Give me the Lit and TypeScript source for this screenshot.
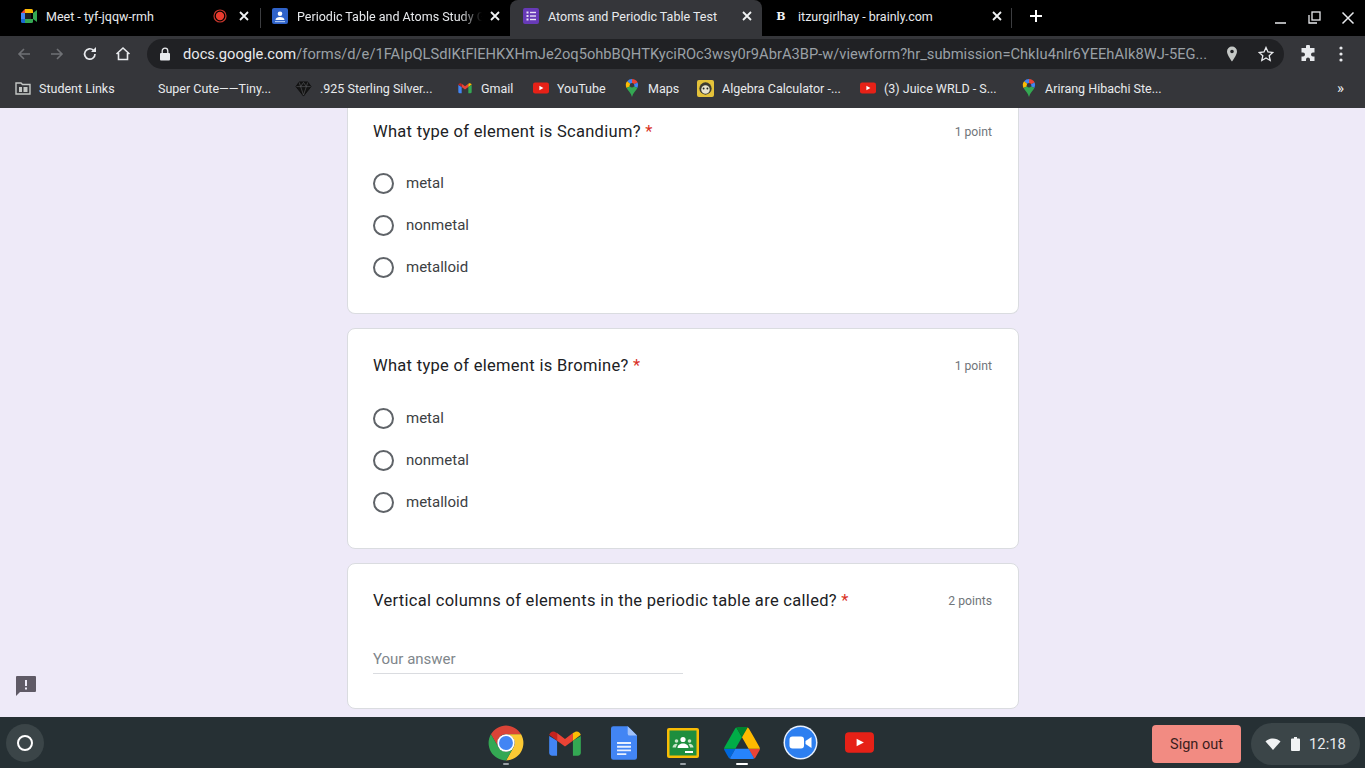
import {css, html, LitElement, svg} from 'lit';
import {customElement} from 'lit/decorators.js';

const meetIcon = html`<svg width="16" height="16" viewBox="0 0 16 16">
    <path d="M0 5l4-4v4z" fill="#ea4335"/>
    <path d="M0 5h4v6H0z" fill="#4285f4"/>
    <path d="M0 11h4v4H1.500A1.500 1.500 0 0 1 0 13.500z" fill="#1967d2"/>
    <path d="M4 1h6.500A1.500 1.500 0 0 1 12 2.500V5H4z" fill="#fbbc04"/>
    <path d="M4 11h8v2.500a1.500 1.500 0 0 1-1.500 1.500H4z" fill="#34a853"/>
    <path d="M12 5l4-3v12l-4-3z" fill="#34a853"/>
    <path d="M4 5h6v6H4z" fill="#1f1f1f"/>
</svg>`;

const classroomTabIcon = html`<svg width="18" height="18" viewBox="0 0 18 18">
    <rect x="1" y="1" width="16" height="16" rx="2" fill="#2f62c9"/>
    <circle cx="9" cy="6.700" r="2.300" fill="#fff"/>
    <path d="M4.500 13c0-2 2-3 4.500-3s4.500 1 4.500 3z" fill="#fff"/>
    <rect x="4" y="14" width="10" height="1.200" fill="#a8c3f0"/>
</svg>`;

const formsIcon = html`<svg width="18" height="18" viewBox="0 0 18 18">
    <rect x="1" y="1" width="16" height="16" rx="2" fill="#673ab7"/>
    <g fill="#e8e0f5">
        <rect x="4.500" y="4.500" width="2" height="2"/>
        <rect x="8" y="4.800" width="6" height="1.400"/>
        <rect x="4.500" y="8" width="2" height="2"/>
        <rect x="8" y="8.300" width="6" height="1.400"/>
        <rect x="4.500" y="11.500" width="2" height="2"/>
        <rect x="8" y="11.800" width="6" height="1.400"/>
    </g>
</svg>`;

const closeIcon = html`<svg width="10" height="10" viewBox="0 0 10 10">
    <path d="M1 1l8 8M9 1l-8 8" stroke="#f1f3f4" stroke-width="1.800" fill="none"/>
</svg>`;

const recordIcon = html`<svg width="14" height="14" viewBox="0 0 14 14">
    <circle cx="7" cy="7" r="6" fill="none" stroke="#c5352b" stroke-width="1.200"/>
    <circle cx="7" cy="7" r="4.200" fill="#ea3b2e"/>
</svg>`;

const folderIcon = html`<svg width="16" height="16" viewBox="0 0 16 16">
    <path d="M1 3h5l1.500 1.500H15V14H1z" fill="none" stroke="#c4c7c5" stroke-width="1.400"/>
    <rect x="4" y="7" width="3" height="5" fill="#c4c7c5"/>
    <rect x="8.500" y="7" width="4" height="5" fill="#c4c7c5"/>
</svg>`;

const gemIcon = html`<svg width="17" height="17" viewBox="0 0 18 18">
    <path d="M4.500 2h9L17 7l-8 10L1 7z" fill="#141414" stroke="#0a0a0a" stroke-width=".8"/>
    <path d="M1.500 7h15M6 7l3 9 3-9M4.500 2.500L6 7l3-4.500L12 7l1.500-4.500" fill="none" stroke="#55565a" stroke-width=".7"/>
</svg>`;

const gmailPaths = svg`
    <path d="M4 15v21a4 4 0 0 0 4 4h6V21z" fill="#4285f4"/>
    <path d="M44 15v21a4 4 0 0 1-4 4h-6V21z" fill="#34a853"/>
    <path d="M14 11.500L24 19l10-7.500V21l-10 7.500L14 21z" fill="#ea4335"/>
    <path d="M4 15c0-4.500 5-7 8.500-4.400L14 11.500V21L4 13.500z" fill="#c5221f"/>
    <path d="M44 15c0-4.500-5-7-8.500-4.400L34 11.500V21l10-7.500z" fill="#fbbc04"/>
`;

const youtubeIcon = (w: number, h: number) => html`<svg width=${w} height=${h} viewBox="0 0 30 21">
    <rect width="30" height="21" rx="4" fill="#e62117"/>
    <path d="M12 6.500l7.500 4-7.500 4z" fill="#fff"/>
</svg>`;

const mapsIcon = html`<svg width="16" height="18" viewBox="0 0 16 20">
    <path d="M8 0a7 7 0 0 0-5.400 2.500L8 7z" fill="#4285f4"/>
    <path d="M8 0a7 7 0 0 1 6.300 4L8 7z" fill="#ea4335"/>
    <path d="M14.300 4A7 7 0 0 1 14 10L8 7z" fill="#4285f4"/>
    <path d="M2.600 2.500A7 7 0 0 0 2 10l6-3z" fill="#fbbc04"/>
    <path d="M2 10c1.500 3 5 5.500 6 10 1-4.500 4.500-7 6-10L8 7z" fill="#34a853"/>
    <circle cx="8" cy="7" r="2.500" fill="#35363a"/>
</svg>`;

const algebraIcon = html`<svg width="17" height="17" viewBox="0 0 18 18">
    <rect width="18" height="18" rx="2" fill="#e4c23a"/>
    <circle cx="9" cy="9" r="6.500" fill="#3c3a30"/>
    <circle cx="9" cy="10" r="4.500" fill="#e8e4d0"/>
    <circle cx="7" cy="9" r="1" fill="#222"/>
    <circle cx="11" cy="9" r="1" fill="#222"/>
</svg>`;

type Tab = { title: string; icon: unknown; width: number; active?: boolean; recording?: boolean; divider?: boolean; fade?: boolean };

const tabs: Tab[] = [
    {title: 'Meet - tyf-jqqw-rmh', icon: meetIcon, width: 251, recording: true, divider: true},
    {title: 'Periodic Table and Atoms Study Guide', icon: classroomTabIcon, width: 249, fade: true},
    {title: 'Atoms and Periodic Table Test', icon: formsIcon, width: 252, active: true},
    {title: 'itzurgirlhay - brainly.com', icon: html`<span class="brainly">B</span>`, width: 250, divider: true},
];

type Bookmark = { label: string; icon?: unknown; width: number };

const bookmarks: Bookmark[] = [
    {label: 'Student Links', icon: folderIcon, width: 119},
    {label: 'Super Cute——Tiny...', width: 161},
    {label: '.925 Sterling Silver...', icon: gemIcon, width: 162},
    {label: 'Gmail', icon: html`<svg width="16" height="16" viewBox="0 0 48 48">${gmailPaths}</svg>`, width: 76},
    {label: 'YouTube', icon: youtubeIcon(16, 12), width: 91},
    {label: 'Maps', icon: mapsIcon, width: 73},
    {label: 'Algebra Calculator -...', icon: algebraIcon, width: 163},
    {label: '(3) Juice WRLD - S...', icon: youtubeIcon(16, 12), width: 161},
    {label: 'Arirang Hibachi Ste...', icon: mapsIcon, width: 150},
];

const choices = ['metal', 'nonmetal', 'metalloid'];

@customElement('app-root')
export class AppRoot extends LitElement {

    static styles = css`
        :host {
            display: flex;
            flex-direction: column;
            width: 1365px;
            height: 768px;
            overflow: hidden;
            font-family: Roboto, "Liberation Sans", sans-serif;
        }

        /* tab strip */
        .tabstrip {
            display: flex;
            align-items: flex-end;
            height: 36px;
            padding-left: 10px;
            background: #000;
            flex: none;
        }

        .tab {
            display: flex;
            align-items: center;
            gap: 7px;
            box-sizing: border-box;
            height: 34px;
            padding: 0 9px 6px 10px;
            color: #e8eaed;
            font-size: 12.500px;
            position: relative;
            flex: none;
        }

        .tab.active {
            height: 36px;
            padding-bottom: 4px;
            padding-left: 12px;
            background: #35363a;
            border-radius: 8px 8px 0 0;
        }

        .tabdivider::after {
            content: "";
            position: absolute;
            right: 0;
            top: 6px;
            width: 1px;
            height: 20px;
            background: #3c3d40;
        }

        .tabtitle {
            flex: 1;
            min-width: 0;
            white-space: nowrap;
            overflow: hidden;
            padding-left: 1px;
        }

        .tabtitle.fade {
            -webkit-mask-image: linear-gradient(90deg, #000 88%, transparent 100%);
            mask-image: linear-gradient(90deg, #000 88%, transparent 100%);
        }

        .tabicon {
            display: flex;
            align-items: center;
            justify-content: center;
            width: 18px;
            height: 18px;
            flex: none;
        }

        .brainly {
            color: #f1f3f4;
            font-family: "DejaVu Serif", serif;
            font-weight: 700;
            font-size: 11px;
        }

        .record {
            display: flex;
            margin-right: 4px;
        }

        .close {
            display: flex;
            align-items: center;
            justify-content: center;
            width: 12px;
        }

        .recording .close {
            margin-right: 2px;
        }

        .newtab {
            display: flex;
            margin-left: 16px;
            padding-bottom: 12px;
        }

        .windowcontrols {
            display: flex;
            align-items: center;
            margin-left: auto;
            padding-bottom: 3px;
        }

        .winbtn {
            display: flex;
            align-items: center;
            justify-content: center;
            width: 34px;
            height: 30px;
        }

        /* toolbar */
        .toolbar {
            display: flex;
            align-items: center;
            height: 36px;
            padding-left: 7px;
            background: #35363a;
            flex: none;
        }

        .navbtn {
            display: flex;
            align-items: center;
            justify-content: center;
            width: 33px;
            height: 30px;
            flex: none;
        }

        .omnibox {
            display: flex;
            align-items: center;
            box-sizing: border-box;
            width: 1137px;
            height: 30px;
            margin-left: 8px;
            padding: 0 10px 0 12px;
            border-radius: 15px;
            background: #202124;
            font-size: 14.700px;
            color: #9aa0a6;
            flex: none;
        }

        .url {
            flex: 1;
            min-width: 0;
            margin-left: 12px;
            white-space: nowrap;
            overflow: hidden;
        }

        .host {
            color: #e8eaed;
        }

        .omniicons {
            display: flex;
            align-items: center;
            gap: 20px;
            margin-left: 18px;
        }

        .extras {
            display: flex;
            align-items: center;
            gap: 22px;
            margin-left: 15px;
        }

        /* bookmarks */
        .bookmarks {
            display: flex;
            align-items: center;
            box-sizing: border-box;
            height: 36px;
            padding: 0 0 4px 15px;
            background: #35363a;
            color: #e8eaed;
            font-size: 12.500px;
            flex: none;
        }

        .bookmark {
            display: flex;
            align-items: center;
            gap: 8px;
            white-space: nowrap;
            flex: none;
        }

        .bookmark.noicon {
            padding-left: 24px;
            box-sizing: border-box;
        }

        .bookmarks .more {
            margin-left: auto;
            padding-right: 21px;
            font-size: 15px;
        }

        /* form */
        .content {
            position: relative;
            flex: 1;
            min-height: 0;
            display: flex;
            flex-direction: column;
            align-items: center;
            gap: 14px;
            padding-left: 1px;
            overflow: hidden;
            background: #eeeaf8;
        }

        .card {
            box-sizing: border-box;
            width: 672px;
            padding: 23px 26px 0 25px;
            background: #fff;
            border: 1px solid #dadce0;
            border-radius: 8px;
            color: #202124;
            flex: none;
        }

        .card.first {
            height: 206px;
            padding-top: 10px;
            border-top: 0;
            border-radius: 0 0 8px 8px;
        }

        .card.second {
            height: 221px;
        }

        .card.third {
            height: 146px;
        }

        .title {
            display: flex;
            align-items: center;
            justify-content: space-between;
            height: 26px;
            font-size: 16.500px;
            letter-spacing: .3px;
        }

        .required {
            color: #d93025;
        }

        .points {
            padding-top: 1px;
            font-size: 12.200px;
            letter-spacing: 0;
            color: #70757a;
        }

        .choices {
            margin-top: 18px;
        }

        .second .choices {
            margin-top: 19px;
        }

        .choice {
            display: flex;
            align-items: center;
            gap: 12px;
            height: 42px;
            font-size: 15px;
            color: #3c4043;
        }

        .radio {
            box-sizing: border-box;
            width: 21px;
            height: 21px;
            border: 2px solid #5f6368;
            border-radius: 50%;
            flex: none;
        }

        .answer {
            box-sizing: border-box;
            width: 310px;
            height: 32px;
            margin-top: 29px;
            padding-top: 8px;
            border-bottom: 1px solid #dadce0;
            font-size: 15px;
            color: #80868b;
        }

        .feedback {
            position: absolute;
            left: 15px;
            bottom: 20px;
            display: flex;
        }

        /* shelf */
        .shelf {
            display: grid;
            grid-template-columns: 1fr auto 1fr;
            align-items: center;
            height: 51px;
            background: #263034;
            flex: none;
        }

        .launcher {
            display: flex;
            align-items: center;
            justify-content: center;
            width: 38px;
            height: 38px;
            margin-left: 6px;
            border-radius: 50%;
            background: #3b4548;
        }

        .launcher span {
            box-sizing: border-box;
            width: 16px;
            height: 16px;
            border: 2px solid #fff;
            border-radius: 50%;
        }

        .apps {
            display: flex;
        }

        .app {
            position: relative;
            display: flex;
            align-items: center;
            justify-content: center;
            width: 59px;
            height: 51px;
        }

        .app.running::after,
        .app.focused::after {
            content: "";
            position: absolute;
            left: 50%;
            bottom: 3px;
            width: 6px;
            height: 2px;
            margin-left: -3px;
            border-radius: 1px;
            background: #9aa0a6;
        }

        .app.focused::after {
            width: 12px;
            margin-left: -6px;
            background: #fff;
        }

        .status {
            display: flex;
            align-items: center;
            justify-content: flex-end;
            gap: 10px;
            padding: 3px 5px 0 0;
        }

        .signout {
            display: flex;
            align-items: center;
            justify-content: center;
            width: 89px;
            height: 38px;
            border-radius: 4px;
            background: #f28b82;
            color: #3a1d1c;
            font-size: 14.500px;
        }

        .tray {
            display: flex;
            align-items: center;
            box-sizing: border-box;
            width: 109px;
            height: 42px;
            padding-left: 14px;
            border-radius: 21px;
            background: #3b4548;
            color: #e8eaed;
            font-size: 14.800px;
        }

        .tray svg {
            flex: none;
        }

        .battery {
            margin-left: 10px;
        }

        .clock {
            margin-left: 9px;
        }
    `;

    render() {
        return html`
            <div class="tabstrip">
                ${tabs.map((tab) => html`
                    <div class="tab ${tab.active ? 'active' : ''} ${tab.divider ? 'tabdivider' : ''} ${tab.recording ? 'recording' : ''}" style="width:${tab.width}px">
                        <span class="tabicon">${tab.icon}</span>
                        <span class="tabtitle ${tab.fade ? 'fade' : ''}">${tab.title}</span>
                        ${tab.recording ? html`<span class="record">${recordIcon}</span>` : ''}
                        <span class="close">${closeIcon}</span>
                    </div>
                `)}
                <span class="newtab">
                    <svg width="16" height="16" viewBox="0 0 16 16">
                        <path d="M8 2v12M2 8h12" stroke="#fff" stroke-width="2" fill="none"/>
                    </svg>
                </span>
                <div class="windowcontrols">
                    <span class="winbtn">
                        <svg width="14" height="14" viewBox="0 0 14 14"><path d="M2 12h11" stroke="#e8eaed" stroke-width="1.500"/></svg>
                    </span>
                    <span class="winbtn">
                        <svg width="14" height="14" viewBox="0 0 14 14">
                            <path d="M2 4v8h8" fill="none" stroke="#e8eaed" stroke-width="1.300"/>
                            <rect x="5" y="1" width="8" height="8" fill="none" stroke="#e8eaed" stroke-width="1.300"/>
                        </svg>
                    </span>
                    <span class="winbtn">
                        <svg width="14" height="14" viewBox="0 0 14 14"><path d="M1.500 1.500l11 11M12.500 1.500l-11 11" stroke="#e8eaed" stroke-width="1.500"/></svg>
                    </span>
                </div>
            </div>

            <div class="toolbar">
                <span class="navbtn">
                    <svg width="16" height="16" viewBox="0 0 16 16"><path d="M14 8H3M8 3L3 8l5 5" fill="none" stroke="#6f7175" stroke-width="1.600"/></svg>
                </span>
                <span class="navbtn">
                    <svg width="16" height="16" viewBox="0 0 16 16"><path d="M2 8h11M8 3l5 5-5 5" fill="none" stroke="#6f7175" stroke-width="1.600"/></svg>
                </span>
                <span class="navbtn">
                    <svg width="16" height="16" viewBox="0 0 16 16">
                        <path d="M13 8a5.200 5.200 0 1 1-1.500-3.700" fill="none" stroke="#e8eaed" stroke-width="1.700"/>
                        <path d="M14 1v5H9z" fill="#e8eaed"/>
                    </svg>
                </span>
                <span class="navbtn">
                    <svg width="16" height="16" viewBox="0 0 16 16"><path d="M1.500 8L8 2l6.500 6M3.500 7v6.500h9V7" fill="none" stroke="#e8eaed" stroke-width="1.600"/></svg>
                </span>
                <div class="omnibox">
                    <svg width="12" height="14" viewBox="0 0 12 14">
                        <rect x="1" y="6" width="10" height="7.500" rx="1" fill="#e8eaed"/>
                        <path d="M3.200 6V4a2.800 2.800 0 0 1 5.600 0v2" fill="none" stroke="#e8eaed" stroke-width="1.300"/>
                    </svg>
                    <span class="url"><span class="host">docs.google.com</span>/forms/d/e/1FAIpQLSdIKtFlEHKXHmJe2oq5ohbBQHTKyciROc3wsy0r9AbrA3BP-w/viewform?hr_submission=ChkIu4nlr6YEEhAIk8WJ-5EG...</span>
                    <span class="omniicons">
                        <svg width="12" height="16" viewBox="0 0 12 16"><path d="M6 .500A5 5 0 0 0 1 5.500c0 3.500 5 10 5 10s5-6.500 5-10a5 5 0 0 0-5-5zm0 6.800a1.800 1.800 0 1 1 0-3.600 1.800 1.800 0 0 1 0 3.600z" fill="#c4c7c5"/></svg>
                        <svg width="16" height="16" viewBox="0 0 16 16"><path d="M8 1.500l2 4.500 4.800.5-3.600 3.200 1 4.800L8 12l-4.200 2.500 1-4.800L1.200 6.500 6 6z" fill="none" stroke="#e8eaed" stroke-width="1.300"/></svg>
                    </span>
                </div>
                <span class="extras">
                    <svg width="18" height="18" viewBox="0 0 18 18"><path d="M7 1.500a2 2 0 0 1 4 0V3h4.500v4.500H14a2 2 0 0 0 0 4h1.500V16H11v-1.500a2 2 0 0 0-4 0V16H2.500v-4.500H4a2 2 0 0 0 0-4H2.500V3H7z" fill="#e8eaed"/></svg>
                    <svg width="4" height="16" viewBox="0 0 4 16"><circle cx="2" cy="2" r="1.600" fill="#e8eaed"/><circle cx="2" cy="8" r="1.600" fill="#e8eaed"/><circle cx="2" cy="14" r="1.600" fill="#e8eaed"/></svg>
                </span>
            </div>

            <div class="bookmarks">
                ${bookmarks.map((b) => html`
                    <div class="bookmark ${b.icon ? '' : 'noicon'}" style="width:${b.width}px">
                        ${b.icon ?? ''}<span>${b.label}</span>
                    </div>
                `)}
                <span class="more">»</span>
            </div>

            <main class="content">
                <section class="card first">
                    ${this.title_('What type of element is Scandium?', '1 point')}
                    ${this.choices_()}
                </section>
                <section class="card second">
                    ${this.title_('What type of element is Bromine?', '1 point')}
                    ${this.choices_()}
                </section>
                <section class="card third">
                    ${this.title_('Vertical columns of elements in the periodic table are called?', '2 points')}
                    <div class="answer">Your answer</div>
                </section>
                <span class="feedback">
                    <svg width="22" height="22" viewBox="0 0 22 22">
                        <path d="M2 1h18a1 1 0 0 1 1 1v14a1 1 0 0 1-1 1H5l-4 4V2a1 1 0 0 1 1-1z" fill="#5f5a66"/>
                        <rect x="10" y="5" width="2" height="6" fill="#eeeaf8"/>
                        <rect x="10" y="12.500" width="2" height="2" fill="#eeeaf8"/>
                    </svg>
                </span>
            </main>

            <footer class="shelf">
                <div class="launcher"><span></span></div>
                <div class="apps">
                    <span class="app running">
                        <svg width="38" height="38" viewBox="0 0 48 48">
                            <path d="M4.950 13A22 22 0 0 1 43.050 13H24A11 11 0 0 0 14.470 29.500z" fill="#db4437"/>
                            <path d="M43.050 13A22 22 0 0 1 24 46L33.530 29.500A11 11 0 0 0 24 13z" fill="#fcc934"/>
                            <path d="M24 46A22 22 0 0 1 4.950 13L14.470 29.500A11 11 0 0 0 33.530 29.500z" fill="#34a853"/>
                            <circle cx="24" cy="24" r="11" fill="#fff"/>
                            <circle cx="24" cy="24" r="8.800" fill="#4285f4"/>
                        </svg>
                    </span>
                    <span class="app">
                        <svg width="38" height="38" viewBox="0 0 48 48">${gmailPaths}</svg>
                    </span>
                    <span class="app">
                        <svg width="26" height="34" viewBox="0 0 28 36">
                            <path d="M2.500 0H18l10 10v23.500a2.500 2.500 0 0 1-2.500 2.500h-23A2.500 2.500 0 0 1 0 33.500v-31A2.500 2.500 0 0 1 2.500 0z" fill="#4285f4"/>
                            <path d="M18 0l10 10H20a2 2 0 0 1-2-2z" fill="#a1c2fa"/>
                            <path d="M6.500 17h15v2h-15zM6.500 21h15v2h-15zM6.500 25h15v2h-15zM6.500 29h10v2h-10z" fill="#e8f0fe"/>
                        </svg>
                    </span>
                    <span class="app running">
                        <svg width="32" height="30" viewBox="0 0 32 30">
                            <rect width="32" height="30" rx="2" fill="#f9bc05"/>
                            <rect x="2.500" y="2.500" width="27" height="25" fill="#1e8e3e"/>
                            <circle cx="16" cy="11.500" r="2.600" fill="#fff"/>
                            <circle cx="9.500" cy="13" r="1.800" fill="#c8e6c9"/>
                            <circle cx="22.500" cy="13" r="1.800" fill="#c8e6c9"/>
                            <path d="M10.500 20c0-3 2.500-4.500 5.500-4.500s5.500 1.500 5.500 4.500z" fill="#fff"/>
                            <path d="M5.500 19.500c0-2.500 2-3.800 4-3.800l1 1c-1 .8-1.500 1.600-1.500 2.800zM26.500 19.500c0-2.500-2-3.800-4-3.800l-1 1c1 .8 1.500 1.600 1.500 2.800z" fill="#c8e6c9"/>
                            <rect x="18" y="23" width="8" height="2" fill="#fff"/>
                        </svg>
                    </span>
                    <span class="app focused">
                        <svg width="36" height="32" viewBox="0 0 87.300 78">
                            <path d="m6.600 66.850 3.850 6.650c.8 1.400 1.950 2.500 3.300 3.300l13.750-23.800h-27.500c0 1.550.4 3.100 1.200 4.500z" fill="#0066da"/>
                            <path d="m43.650 25-13.750-23.800c-1.350.8-2.500 1.900-3.300 3.300l-25.400 44a9.060 9.060 0 0 0-1.200 4.500h27.500z" fill="#00ac47"/>
                            <path d="m73.550 76.800c1.350-.8 2.500-1.900 3.300-3.300l1.600-2.750 7.650-13.250c.8-1.400 1.200-2.950 1.200-4.500h-27.502l5.852 11.500z" fill="#ea4335"/>
                            <path d="m43.650 25 13.750-23.800c-1.350-.8-2.900-1.200-4.500-1.200h-18.500c-1.600 0-3.150.45-4.500 1.200z" fill="#00832d"/>
                            <path d="m59.800 53h-32.300l-13.750 23.800c1.350.8 2.900 1.200 4.500 1.200h50.800c1.600 0 3.150-.45 4.500-1.200z" fill="#2684fc"/>
                            <path d="m73.400 26.500-12.700-22c-.8-1.400-1.950-2.500-3.300-3.300l-13.750 23.800 16.150 28h27.450c0-1.550-.4-3.100-1.200-4.500z" fill="#ffba00"/>
                        </svg>
                    </span>
                    <span class="app">
                        <svg width="35" height="35" viewBox="0 0 35 35">
                            <circle cx="17.500" cy="17.500" r="17" fill="#e8f0fe"/>
                            <circle cx="17.500" cy="17.500" r="15.500" fill="#2d7ff0"/>
                            <rect x="6.500" y="11.500" width="14.500" height="12" rx="3" fill="#fff"/>
                            <path d="M22.500 16l6-4v11l-6-4z" fill="#fff"/>
                        </svg>
                    </span>
                    <span class="app">${youtubeIcon(29, 21)}</span>
                </div>
                <div class="status">
                    <span class="signout">Sign out</span>
                    <div class="tray">
                        <svg width="16" height="14" viewBox="0 0 16 14"><path d="M.500 4.500C4.500.5 11.500.5 15.500 4.500L8 13z" fill="#f1f3f4"/></svg>
                        <svg class="battery" width="9" height="14" viewBox="0 0 9 14"><path d="M3 0h3v1.500h2a1 1 0 0 1 1 1V13a1 1 0 0 1-1 1H1a1 1 0 0 1-1-1V2.500a1 1 0 0 1 1-1h2z" fill="#f1f3f4"/></svg>
                        <span class="clock">12:18</span>
                    </div>
                </div>
            </footer>
        `;
    }

    private title_(text: string, points: string) {
        return html`
            <div class="title">
                <span>${text} <span class="required">*</span></span>
                <span class="points">${points}</span>
            </div>`;
    }

    private choices_() {
        return html`
            <div class="choices">
                ${choices.map((choice) => html`
                    <div class="choice"><span class="radio"></span>${choice}</div>
                `)}
            </div>`;
    }
}
